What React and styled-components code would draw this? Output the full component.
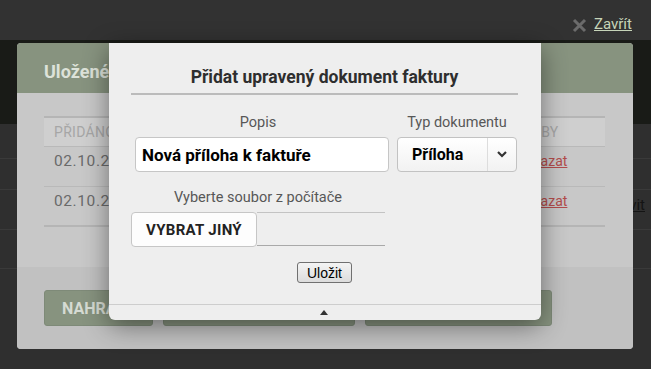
import React from 'react';
import styled, { createGlobalStyle } from 'styled-components';

const Global = createGlobalStyle`
  html, body { margin: 0; padding: 0; background: #2f2f2f; }
  body { width: 651px; height: 369px; overflow: hidden; font-family: Roboto, "DejaVu Sans", sans-serif; }
  * { box-sizing: border-box; }
`;

const Screen = styled.div`
  position: relative;
  width: 651px;
  height: 369px;
  overflow: hidden;
  background: #2f2f2f;
`;

/* ---------- page behind the lightbox ---------- */
const PageTop = styled.div`
  height: 40px;
  background: #323232;
`;
const PageBand = styled.div`
  height: 84px;
  background: #191b17;
`;
const PageRow = styled.div`
  height: ${p => p.$h}px;
  border-bottom: 1px solid #3a3a3a;
  display: flex;
  justify-content: flex-end;
  align-items: flex-start;
  padding: 6px 6px 0 0;
`;
const PageLink = styled.a`
  color: #141414;
  font-size: 15px;
  line-height: 18px;
  text-decoration: underline;
`;

/* ---------- lightbox ---------- */
const Lightbox = styled.div`
  position: absolute;
  inset: 0;
  display: flex;
  flex-direction: column;
`;
const CloseBar = styled.div`
  height: 43px;
  display: flex;
  justify-content: flex-end;
  align-items: flex-start;
  gap: 7px;
  padding: 15px 19px 0 0;
`;
const CloseIcon = styled.svg`
  width: 15px;
  height: 15px;
  margin-top: 3px;
`;
const CloseLink = styled.a`
  color: #c6d4b8;
  font-size: 15px;
  line-height: 18px;
  text-decoration: underline;
`;

const Panel = styled.section`
  position: relative;
  margin: 0 18px 0 17px;
  height: 306px;
  background: #c8c8c8;
  border-radius: 4px;
  display: flex;
  flex-direction: column;
`;
const PanelHead = styled.header`
  height: 50px;
  flex: none;
  background: #87937f;
  border-radius: 4px 4px 0 0;
  padding: 19px 27px 0;
  font-weight: 700;
  font-size: 18px;
  line-height: 20px;
  color: #dde2d9;
  white-space: nowrap;
`;
const PanelBody = styled.div`
  height: 174px;
  flex: none;
  padding: 23px 28px 0 27px;
`;
const Table = styled.div`
  border-top: 2px solid #b5b5b5;
  border-bottom: 2px solid #b5b5b5;
`;
const Row = styled.div`
  display: grid;
  grid-template-columns: 1fr 100px;
  height: ${p => p.$h}px;
  padding: ${p => (p.$head ? '0' : '5px')} 0 0 10px;
  align-items: ${p => (p.$head ? 'center' : 'start')};
  background: ${p => (p.$head ? '#cfcfcf' : 'transparent')};
  border-bottom: ${p => (p.$last ? 'none' : '1px solid #b9b9b9')};
  color: ${p => (p.$head ? '#a6a6a6' : '#6a6a6a')};
  font-size: ${p => (p.$head ? '14px' : '15.5px')};
  text-transform: ${p => (p.$head ? 'uppercase' : 'none')};
  line-height: 19px;
  letter-spacing: ${p => (p.$head ? '0.3px' : '0.6px')};
  white-space: nowrap;
`;
const Cell = styled.span`
  padding-left: ${p => p.$indent || 0}px;
`;
const DeleteLink = styled.a`
  color: #b34c4c;
  font-size: 14px;
  letter-spacing: 0;
  text-decoration: underline;
`;

const PanelFoot = styled.footer`
  flex: 1;
  background: #c1c1c1;
  border-radius: 0 0 4px 4px;
  display: flex;
  gap: 10px;
  padding: 23px 27px 0;
`;
const GreenButton = styled.button`
  width: ${p => p.$w}px;
  height: 36px;
  border: 1px solid #7e8a78;
  border-radius: 3px;
  background: #87937f;
  color: #d6dbd3;
  font-family: Roboto, sans-serif;
  font-weight: 700;
  font-size: 16px;
  text-align: left;
  padding: 0 0 0 17px;
  white-space: nowrap;
  overflow: hidden;
`;

/* ---------- dialog ---------- */
const Dialog = styled.div`
  position: absolute;
  left: 92px;
  top: 0;
  width: 432px;
  height: 277px;
  background: #eeeeee;
  border-radius: 0 0 6px 6px;
  box-shadow: 0 6px 26px rgba(0, 0, 0, 0.45);
  display: flex;
  flex-direction: column;
`;
const DialogBody = styled.div`
  flex: 1;
  padding: 0 23px 0 22px;
  display: flex;
  flex-direction: column;
`;
const Title = styled.h2`
  margin: 0;
  padding: 23px 0 5px;
  border-bottom: 2px solid #bbbbbb;
  text-align: center;
  font-size: 17.5px;
  line-height: 22px;
  font-weight: 700;
  color: #2e2e2e;
`;
const Form = styled.div`
  display: grid;
  grid-template-columns: 254px 120px;
  column-gap: 12px;
  margin-top: 19px;
`;
const Label = styled.label`
  display: block;
  text-align: center;
  font-size: 14.5px;
  line-height: 17px;
  color: #575757;
  margin-top: ${p => p.$top || 0}px;
  margin-bottom: 6px;
`;
const Field = styled.div`
  display: flex;
  flex-direction: column;
`;
const TextInput = styled.div`
  width: 254px;
  height: 35px;
  margin-left: 4px;
  border: 1px solid #c6c6c6;
  border-radius: 4px;
  background: #fff;
  padding: 0 6px;
  display: flex;
  align-items: center;
  font-weight: 700;
  font-size: 17px;
  color: #000;
  white-space: nowrap;
`;
const Select = styled.div`
  height: 35px;
  border: 1px solid #c2c2c2;
  border-radius: 4px;
  background: linear-gradient(#ffffff, #f2f2f2);
  display: flex;
`;
const SelectValue = styled.span`
  flex: 1;
  display: flex;
  align-items: center;
  padding-left: 14px;
  font-weight: 700;
  font-size: 16px;
  color: #000;
`;
const SelectArrow = styled.span`
  width: 29px;
  border-left: 1px solid #dddddd;
  display: flex;
  align-items: center;
  justify-content: center;
`;
const FileRow = styled.div`
  display: flex;
  width: 254px;
`;
const FileButton = styled.button`
  width: 126px;
  height: 35px;
  flex: none;
  border: 1px solid #c6c6c6;
  border-radius: 4px;
  background: #fdfdfd;
  font-family: Roboto, sans-serif;
  font-weight: 700;
  font-size: 15px;
  letter-spacing: 0.3px;
  color: #222;
  padding: 0;
`;
const FileName = styled.div`
  flex: 1;
  height: 34px;
  border-top: 1px solid #c3c3c3;
  border-bottom: 1px solid #a9a9a9;
`;
const SaveButton = styled.button`
  align-self: center;
  margin-top: 15px;
  width: 55px;
  height: 21px;
  border: 1px solid #707070;
  border-radius: 3px;
  background: linear-gradient(#f4f4f4, #dcdcdc);
  font-family: "Liberation Sans", Arial, sans-serif;
  font-size: 14px;
  color: #000;
  padding: 0;
`;
const DialogFoot = styled.div`
  height: 16px;
  flex: none;
  border-top: 1px solid #cdcdcd;
  display: flex;
  justify-content: center;
  padding-top: 5px;
`;
const Triangle = styled.span`
  width: 0;
  height: 0;
  margin-left: -2px;
  border-left: 4px solid transparent;
  border-right: 4px solid transparent;
  border-bottom: 5px solid #333;
`;

export default function App() {
  return (
    <Screen>
      <Global />
      <PageTop />
      <PageBand />
      <PageRow $h={35} />
      <PageRow $h={31} />
      <PageRow $h={40}>
        <PageLink>Upravit</PageLink>
      </PageRow>
      <PageRow $h={39} />

      <Lightbox>
        <CloseBar>
          <CloseIcon viewBox="0 0 15 15">
            <path d="M2 2 L13 13 M13 2 L2 13" stroke="#6b6b6b" strokeWidth="3" />
          </CloseIcon>
          <CloseLink>Zavřít</CloseLink>
        </CloseBar>

        <Panel>
          <PanelHead>Uložené dokumenty</PanelHead>
          <PanelBody>
            <Table>
              <Row $head $h={29}>
                <Cell>Přidáno</Cell>
                <Cell $indent={2}>Služby</Cell>
              </Row>
              <Row $h={40}>
                <Cell>02.10.2014</Cell>
                <Cell $indent={15}><DeleteLink>Smazat</DeleteLink></Cell>
              </Row>
              <Row $h={38} $last>
                <Cell>02.10.2014</Cell>
                <Cell $indent={15}><DeleteLink>Smazat</DeleteLink></Cell>
              </Row>
            </Table>
          </PanelBody>
          <PanelFoot>
            <GreenButton $w={109}>NAHRÁT</GreenButton>
            <GreenButton $w={192}>ODESLAT EMAILEM</GreenButton>
            <GreenButton $w={187}>STÁHNOUT VŠE</GreenButton>
          </PanelFoot>

          <Dialog>
            <DialogBody>
              <Title>Přidat upravený dokument faktury</Title>
              <Form>
                <Field>
                  <Label>Popis</Label>
                  <TextInput>Nová příloha k faktuře</TextInput>
                </Field>
                <Field>
                  <Label>Typ dokumentu</Label>
                  <Select>
                    <SelectValue>Příloha</SelectValue>
                    <SelectArrow>
                      <svg width="10" height="7" viewBox="0 0 10 7">
                        <polyline points="1,1 5,5 9,1" fill="none" stroke="#333" strokeWidth="2.2" />
                      </svg>
                    </SelectArrow>
                  </Select>
                </Field>
                <Field>
                  <Label $top={17}>Vyberte soubor z počítače</Label>
                  <FileRow>
                    <FileButton>VYBRAT JINÝ</FileButton>
                    <FileName />
                  </FileRow>
                </Field>
              </Form>
              <SaveButton>Uložit</SaveButton>
            </DialogBody>
            <DialogFoot>
              <Triangle />
            </DialogFoot>
          </Dialog>
        </Panel>
      </Lightbox>
    </Screen>
  );
}
